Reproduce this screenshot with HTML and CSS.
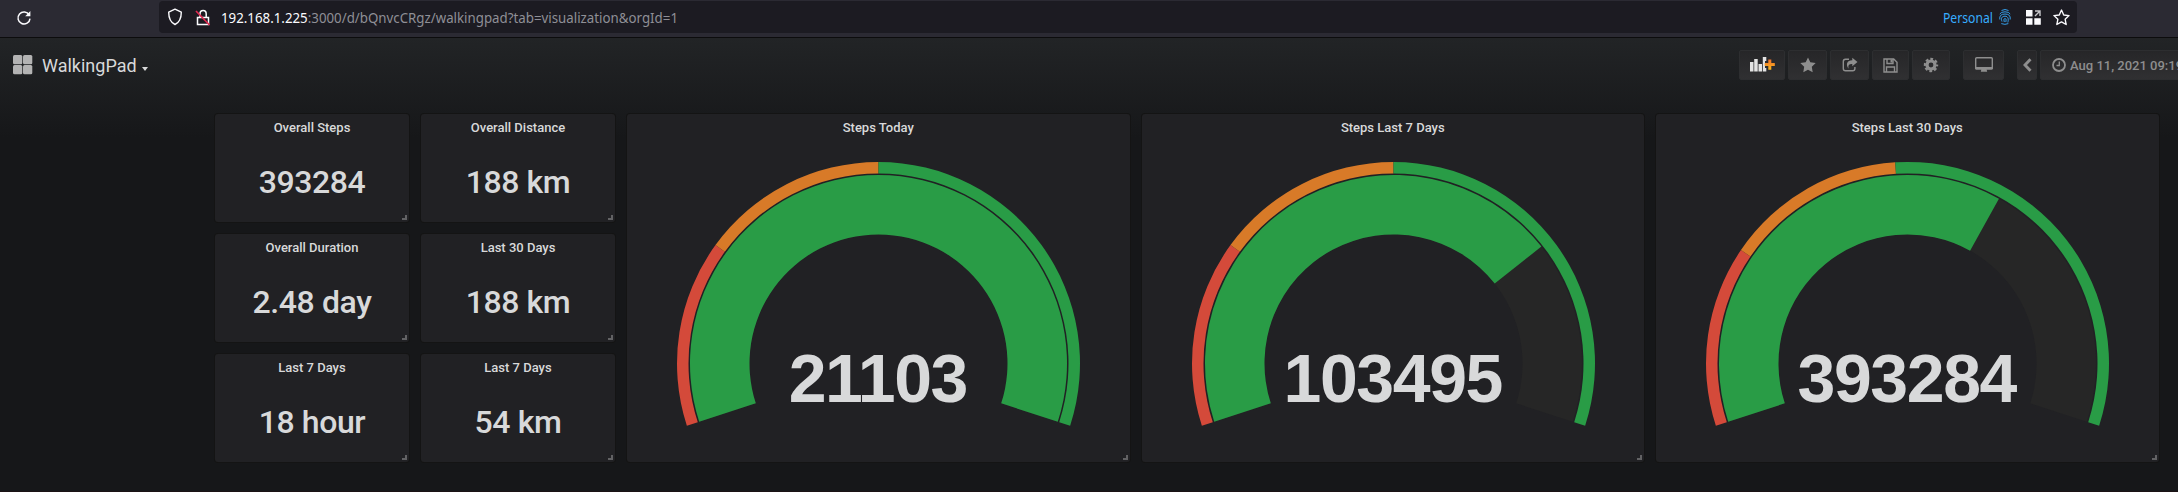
FILE: index.html
```
<!DOCTYPE html>
<html lang="en">
<head>
<meta charset="utf-8">
<title>WalkingPad</title>
<link rel="stylesheet" href="styles.css">
</head>
<body>
<header class="browser">
  <svg class="reload" width="16" height="16" viewBox="0 0 16 16"><path d="M13.200 5A6 6 0 1 0 14 8.600" fill="none" stroke="#fbfbfe" stroke-width="1.500"/><path d="M14.400 1v5.200H9.200z" fill="#fbfbfe"/></svg>
  <div class="urlbar">
    <svg class="shield" width="16" height="18" viewBox="0 0 16 18"><path d="M8 1.200 14.300 4.200c0 6-1.600 10-6.300 12.300C3.300 14.200 1.700 10.200 1.700 4.200z" fill="none" stroke="#fbfbfe" stroke-width="1.400" stroke-linejoin="round"/></svg>
    <svg class="lock" width="16" height="17" viewBox="0 0 16 17"><path d="M2.500 8.500h11v7h-11zM5 8.500V5a3 3.300 0 0 1 6.200 0v3.500" fill="none" stroke="#fbfbfe" stroke-width="1.500"/><path d="m1 2 13.500 14" stroke="#e22850" stroke-width="1.700"/></svg>
    <svg class="url" width="470" height="32"><text x="0" y="21.500" textLength="457" lengthAdjust="spacingAndGlyphs"><tspan class="host">192.168.1.225</tspan>:3000/d/bQnvcCRgz/walkingpad?tab=visualization&amp;orgId=1</text></svg>
    <svg class="personal" width="55" height="32"><text x="0" y="21.500" textLength="50" lengthAdjust="spacingAndGlyphs">Personal</text></svg>
    <svg class="finger" width="12" height="16" viewBox="0 0 12 16" fill="none" stroke="#37adff" stroke-width=".9"><path d="M2.500 1.500Q6-.5 9.500 1.500M.8 5Q2 2.800 6 2.800T11.200 5M.8 10.500Q0 5 6 5t5.200 5.500M3 12.500C1.700 9.500 2.700 7.200 6 7.200s3.800 3.200 2.800 6.300M5.300 13Q4 9.500 6 9.500t.8 3.500M2.300 14.600q3.700 1.500 7 0"/></svg>
    <svg class="apps" width="15" height="15" viewBox="0 0 15 15"><path d="M0 0h6.500v6.500H0zM0 8.300h6.500v6.500H0zM8.300 8.300h6.500v6.500H8.300z" fill="#fbfbfe"/><path d="M9 1h5v5M14 1 9 6" fill="none" stroke="#c8c8cc" stroke-width="1.400"/></svg>
    <svg class="bookmark" width="17" height="17" viewBox="0 0 16 16"><path d="m8 1 2.100 4.600 5 .6-3.700 3.400 1 5L8 12.100l-4.400 2.500 1-5L.9 6.200l5-.6z" fill="none" stroke="#fbfbfe" stroke-width="1.300" stroke-linejoin="round"/></svg>
  </div>
</header>

<nav class="navbar">
  <svg class="grid-icon" width="20" height="20" viewBox="0 0 20 20" fill="#b3b3b3"><rect width="9.300" height="9.300" rx="1.500"/><rect x="10" width="9.300" height="9.300" rx="1.500"/><rect y="9.900" width="9.300" height="9.300" rx="1.500"/><rect x="10" y="9.900" width="9.300" height="9.300" rx="1.500"/></svg>
  <span class="title">WalkingPad</span><i class="caret"></i>
  <div class="actions">
    <button class="btn add"><svg width="25" height="16" viewBox="0 0 25 16"><defs><linearGradient id="plus" x1="0" y1="0" x2="0" y2="1"><stop stop-color="#f0702c"/><stop offset="1" stop-color="#fbb81a"/></linearGradient></defs><path d="M0 5h3.500v9.500H0zM4.200 2h3.500v12.500H4.200zM8.500 7h3.500v7.500H8.500zM12.800 0h3.500v4H15v7h1.300v3.500h-3.500z" fill="#e3e3e3"/><path d="M18.300 2.500h3v3.600h3.500v3h-3.500v3.700h-3V9.100h-3.600v-3h3.600z" fill="url(#plus)"/></svg></button>
    <button class="btn star"><svg width="16" height="16" viewBox="0 0 16 16"><path d="m8 .4 2.300 4.900 5.400.7-3.900 3.800.9 5.400L8 12.700l-4.700 2.500.9-5.400L.3 6l5.400-.7z" fill="#8e8e8e"/></svg></button>
    <button class="btn share"><svg width="16" height="16" viewBox="0 0 16 16"><path d="M7 2.200H3.500Q1.300 2.200 1.300 4.400v7.200q0 2.200 2.200 2.200h7.200q2.200 0 2.200-2.200V10" fill="none" stroke="#8e8e8e" stroke-width="1.400"/><path d="M10.300.7 15.500 5l-5.200 4.300V6.900C7 6.900 5.800 8 6.700 11.700 3.300 7.600 5 3.200 10.300 3.200z" fill="#8e8e8e"/></svg></button>
    <button class="btn save"><svg width="15" height="15" viewBox="0 0 15 15"><path d="M1 1h9.700L14 4.300V14H1zM4 1v4.500h6V1M3.500 14V9h8v5" fill="none" stroke="#8e8e8e" stroke-width="1.400"/><path d="M7.500 1.500h2v3h-2z" fill="#8e8e8e"/></svg></button>
    <button class="btn cog"><svg width="16" height="16" viewBox="-8 -8 16 16"><circle r="4" fill="none" stroke="#8e8e8e" stroke-width="3.200"/><circle r="6.100" fill="none" stroke="#8e8e8e" stroke-width="2.200" stroke-dasharray="2.800 1.990" stroke-dashoffset="1.400"/></svg></button>
    <button class="btn monitor"><svg width="18" height="16" viewBox="0 0 18 16"><rect x=".7" y=".7" width="16.600" height="11" rx="1" fill="none" stroke="#8e8e8e" stroke-width="1.400"/><path d="M0 10h18v1.500q0 1-1 1H1q-1 0-1-1zM6.500 12h5l.7 2.800H5.800z" fill="#8e8e8e"/></svg></button>
    <button class="btn prev"><svg width="9" height="14" viewBox="0 0 9 14"><path d="M7.500 1.300 2 7l5.500 5.700" fill="none" stroke="#8e8e8e" stroke-width="2.900"/></svg></button>
    <button class="btn time"><svg width="14" height="14" viewBox="0 0 14 14" fill="none" stroke="#8e8e8e"><circle cx="7" cy="7" r="6" stroke-width="1.800"/><path d="M7.300 3.500v4H4.500" stroke-width="1.300"/></svg><span>Aug 11, 2021 09:19</span></button>
  </div>
</nav>

<main class="dashboard">
  <section class="panel"><h2>Overall Steps</h2><p>393284</p></section>
  <section class="panel"><h2>Overall Distance</h2><p>188 km</p></section>
  <section class="panel gauge today"><h2>Steps Today</h2><svg viewBox="0 0 503 320" data-v="21103" data-max="20000" data-t="5000,10000"></svg></section>
  <section class="panel gauge week"><h2>Steps Last 7 Days</h2><svg viewBox="0 0 503 320" data-v="103495" data-max="140000" data-t="35000,70000"></svg></section>
  <section class="panel gauge month"><h2>Steps Last 30 Days</h2><svg viewBox="0 0 503 320" data-v="393284" data-max="620000" data-t="150000,300000"></svg></section>
  <section class="panel"><h2>Overall Duration</h2><p>2.48 day</p></section>
  <section class="panel"><h2>Last 30 Days</h2><p>188 km</p></section>
  <section class="panel"><h2>Last 7 Days</h2><p>18 hour</p></section>
  <section class="panel"><h2>Last 7 Days</h2><p>54 km</p></section>
</main>
<script src="gauge.js"></script>
</body>
</html>
```
FILE: styles.css
```
* { box-sizing: border-box; }
body {
  margin: 0;
  width: 2178px;
  height: 492px;
  overflow: hidden;
  color: #d8d9da;
  font-family: Roboto, "Liberation Sans", sans-serif;
  background: linear-gradient(180deg, #222426 38px, #161719 138px);
  border-bottom: 1px solid #1b1214;
}
.browser {
  height: 38px;
  padding: 1px 0 0 16px;
  display: flex;
  align-items: flex-start;
  background: #2b2a33;
  border-bottom: 1px solid #0c0c0d;
}
.reload { margin-top: 9px; }
.urlbar {
  width: 1918px;
  height: 32px;
  margin-left: 127px;
  padding-left: 8px;
  display: flex;
  align-items: center;
  background: #1c1b22;
  border-radius: 4px;
}
.urlbar svg { flex: none; }
.lock { margin-left: 12px; }
.url { margin-left: 10px; }
.url text, .personal text { font: 14px "Noto Sans", sans-serif; fill: #8f8f96; }
.url .host { fill: #fbfbfe; }
.personal { margin-left: 1252px; }
.personal text { fill: #37adff; }
.finger { margin-left: 1px; }
.apps { margin-left: 15px; }
.bookmark { margin-left: 12px; }
.navbar {
  height: 76px;
  padding: 12px 0 0 13px;
  display: flex;
  align-items: flex-start;
  overflow: hidden;
}
.grid-icon { margin-top: 5px; }
.title { margin-left: 9px; font-size: 18px; line-height: 31px; width: 95px; }
.caret {
  margin: 17px 0 0 5px;
  border: 3.500px solid transparent;
  border-top: 4px solid #d8d9da;
  border-bottom: 0;
}
.actions { display: flex; margin-left: auto; margin-right: -70px; flex: none; }
.btn {
  height: 30px;
  padding: 0;
  flex: none;
  display: flex;
  align-items: center;
  justify-content: center;
  background: linear-gradient(#262628, #303032);
  border: 1px solid #2d2e30;
  border-radius: 2px;
  color: #8e8e8e;
  font: 500 13px Roboto, sans-serif;
  white-space: nowrap;
}
.add { width: 46px; }
.star, .share { width: 39px; margin-left: 3px; }
.save { width: 37px; margin-left: 3px; }
.cog { width: 38px; margin-left: 3px; }
.monitor { width: 41px; margin-left: 13px; }
.prev { width: 20px; margin-left: 13px; }
.time { width: 208px; margin-left: 3px; padding-left: 11px; justify-content: flex-start; gap: 4px; }
.dashboard {
  display: grid;
  grid-template-columns: 194px 194px repeat(3, 502.500px);
  grid-template-rows: repeat(3, 108px);
  gap: 12px;
  margin-left: 215px;
}
.panel {
  position: relative;
  background: #212124;
  border-radius: 3px;
  box-shadow: 0 0 0 1px #141414;
  text-align: center;
}
.panel::after {
  content: "";
  box-sizing: border-box;
  position: absolute;
  right: 2px;
  bottom: 2px;
  width: 5px;
  height: 5px;
  border: solid #626264;
  border-width: 0 2px 2px 0;
}
.panel h2 { margin: 0; font-size: 13px; font-weight: 500; line-height: 27px; height: 28px; }
.panel p { margin: 0; font-size: 32px; letter-spacing: -.4px; font-weight: 500; line-height: 80px; height: 80px; }
.gauge { grid-row: 1 / span 3; }
.today { grid-column: 3; }
.week { grid-column: 4; }
.month { grid-column: 5; }
.gauge svg { display: block; width: 503px; height: 320px; }
.value { font: bold 68px "Liberation Sans", Arial, sans-serif; letter-spacing: -1.400px; fill: #d8d9da; text-anchor: middle; }
```
FILE: gauge.js
```
const CX = 251.5, CY = 221.5, START = 162, SWEEP = 216;

function point(r, fraction) {
  const a = (START + SWEEP * fraction) * Math.PI / 180;
  return (CX + r * Math.cos(a)).toFixed(2) + " " + (CY + r * Math.sin(a)).toFixed(2);
}

function arc(r0, r1, from, to, color) {
  const large = (to - from) * SWEEP > 180 ? 1 : 0;
  return `<path fill="${color}" d="M${point(r1, from)}A${r1} ${r1} 0 ${large} 1 ${point(r1, to)}L${point(r0, to)}A${r0} ${r0} 0 ${large} 0 ${point(r0, from)}z"/>`;
}

document.querySelectorAll(".gauge svg").forEach(svg => {
  const max = +svg.dataset.max;
  const [low, mid] = svg.dataset.t.split(",").map(t => t / max);
  const value = Math.min(1, svg.dataset.v / max);
  svg.innerHTML =
    arc(129, 188.5, 0, 1, "#262626") +
    arc(129, 188.5, 0, value, "#299c46") +
    arc(190, 201.5, 0, low, "#d44a3a") +
    arc(190, 201.5, low, mid, "#d87a28") +
    arc(190, 201.5, mid, 1, "#299c46") +
    `<text class="value" x="${CX - 0.7}" y="260">${svg.dataset.v}</text>`;
});
```
